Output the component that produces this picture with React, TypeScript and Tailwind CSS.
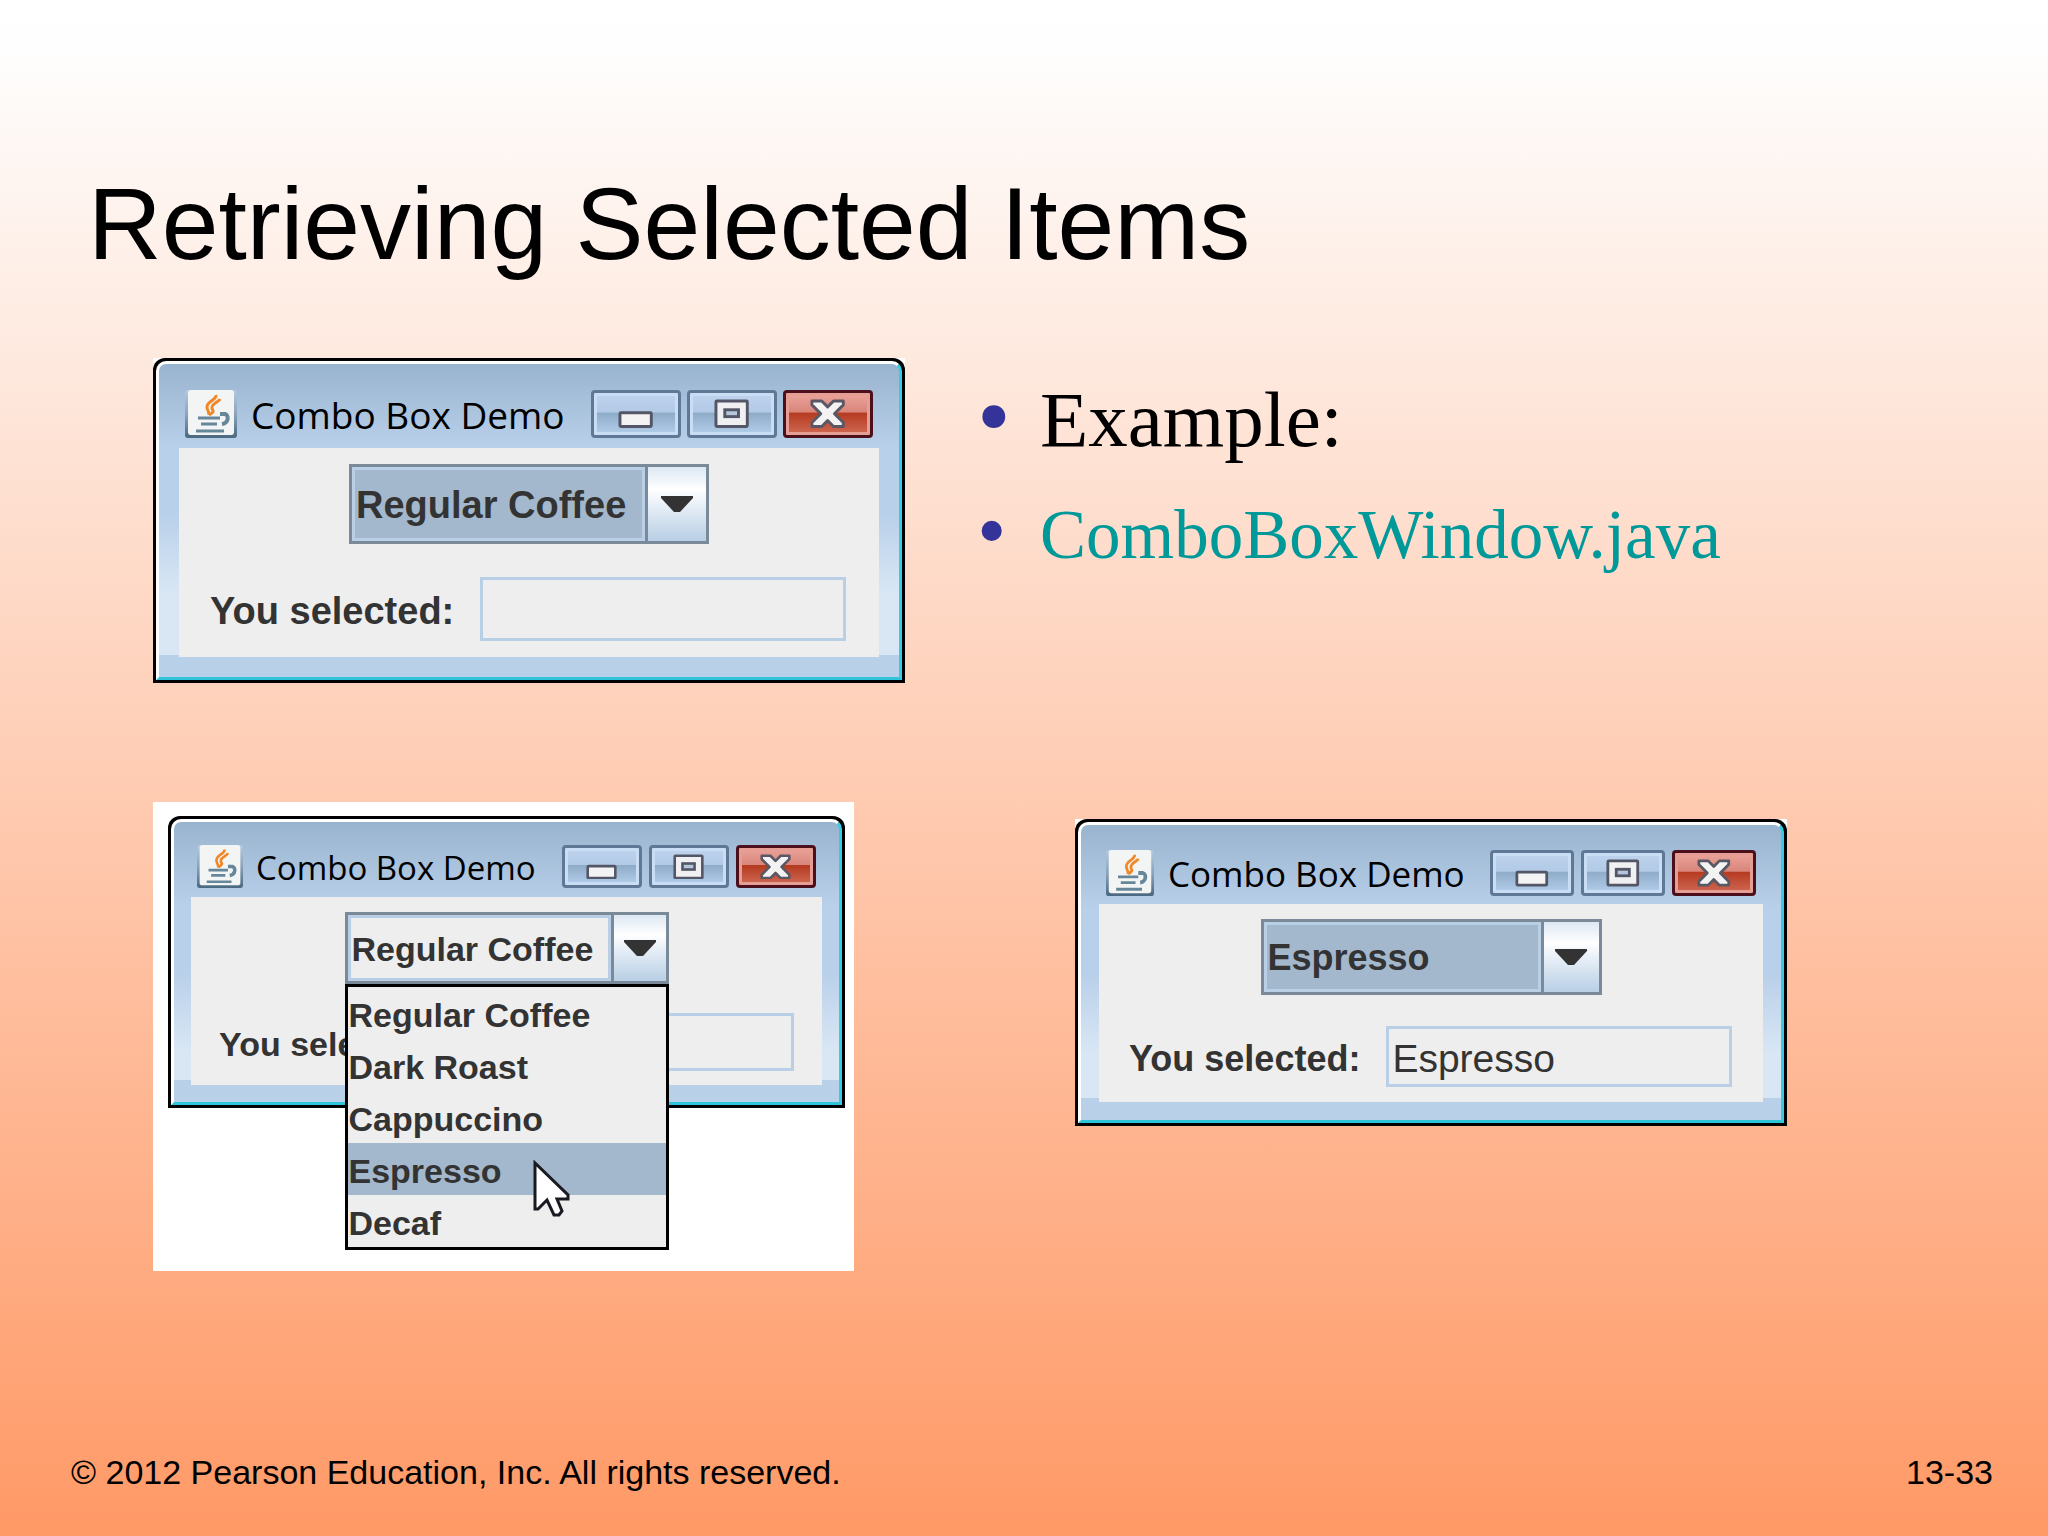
type Size = 'lg' | 'md' | 'sm';

interface DemoWindowProps {
    id: string;
    size: Size;
    item: string;
    result: string;
    open?: boolean;
}

const coffees = ['Regular Coffee', 'Dark Roast', 'Cappuccino', 'Espresso', 'Decaf'];

const sizes = {
    lg: {
        frame: 'w-[752px]',
        bar: 'h-[84px] pt-[26px] px-[26px]',
        icon: 'w-[52px] h-[48px] mr-[14px]',
        title: 'text-[37px] leading-[50px]',
        buttons: 'gap-[6px]',
        button: 'w-[90px] h-[48px]',
        body: 'mx-[20px] mb-[20px] h-[209px] pt-[16px]',
        combo: 'w-[360px] h-[80px] text-[38px]',
        arrow: 'w-[61px]',
        row: 'mt-[33px] pl-[31px] pr-[33px]',
        label: 'text-[38px]',
        field: 'h-[64px] ml-[26px]',
    },
    md: {
        frame: 'w-[712px]',
        bar: 'h-[79px] pt-[25px] px-[25px]',
        icon: 'w-[48px] h-[46px] mr-[14px]',
        title: 'text-[35px] leading-[48px]',
        buttons: 'gap-[7px]',
        button: 'w-[84px] h-[46px]',
        body: 'mx-[18px] mb-[18px] h-[198px] pt-[15px]',
        combo: 'w-[341px] h-[76px] text-[36px]',
        arrow: 'w-[58px]',
        row: 'mt-[31px] pl-[30px] pr-[31px]',
        label: 'text-[36px]',
        field: 'h-[61px] ml-[26px]',
    },
    sm: {
        frame: 'w-[677px]',
        bar: 'h-[75px] pt-[23px] px-[23px]',
        icon: 'w-[46px] h-[43px] mr-[13px]',
        title: 'text-[33px] leading-[45px]',
        buttons: 'gap-[7px]',
        button: 'w-[80px] h-[43px]',
        body: 'mx-[17px] mb-[17px] h-[188px] pt-[15px]',
        combo: 'w-[324px] h-[72px] text-[34px]',
        arrow: 'w-[55px]',
        row: 'mt-[29px] px-[28px]',
        label: 'text-[34px]',
        field: 'h-[58px] ml-[24px]',
    },
};

function JavaIcon({ className }: { className: string }) {
    return (
        <svg viewBox="0 0 52 48" preserveAspectRatio="none" className={className} aria-hidden="true">
            <defs>
                <linearGradient id="java-edge" x1="0" y1="0" x2="0" y2="1">
                    <stop offset="0" stopColor="#b4c9dd" />
                    <stop offset="0.5" stopColor="#8ba4ba" />
                    <stop offset="1" stopColor="#4a687f" />
                </linearGradient>
            </defs>
            <rect x="0" y="0" width="52" height="48" rx="3" fill="url(#java-edge)" />
            <rect x="3" y="0" width="46" height="45" rx="3" fill="#f3f5f5" />
            <path d="M31 5c1 5-9 6-9 12 0 3 2 4 2 8" fill="none" stroke="#f0882a" strokeWidth="3" />
            <path d="M35 9c-1 3-7 4-8 8s5 3-3 8" fill="none" stroke="#f0882a" strokeWidth="3" />
            <path d="M13 28h22M16 34h16M11 41h28" fill="none" stroke="#66869a" strokeWidth="3" />
            <path d="M35 24h5c4 1 4 9-3 10" fill="none" stroke="#66869a" strokeWidth="4" />
        </svg>
    );
}

function MinimizeIcon() {
    return (
        <svg viewBox="0 0 36 30" className="h-7/10" aria-hidden="true">
            <rect x="2" y="14" width="32" height="14" rx="1" fill="#f3f3f3" stroke="#535666" strokeWidth="3" />
        </svg>
    );
}

function MaximizeIcon() {
    return (
        <svg viewBox="0 0 36 30" className="h-7/10" aria-hidden="true">
            <rect x="2" y="2" width="32" height="26" rx="1" fill="#f0f0f2" stroke="#535666" strokeWidth="3" />
            <rect x="11" y="11" width="14" height="7" fill="#b5c6dc" stroke="#535666" strokeWidth="3" />
        </svg>
    );
}

function CloseIcon() {
    return (
        <svg viewBox="0 0 36 30" className="h-7/10" aria-hidden="true">
            <path
                d="M2 2h10l6 6 6-6h10v4l-9 9 9 9v4H24l-6-6-6 6H2v-4l9-9-9-9z"
                fill="#f3f3f3"
                stroke="#5b5865"
                strokeWidth="3"
                strokeLinejoin="round"
            />
        </svg>
    );
}

function Cursor() {
    return (
        <svg viewBox="0 0 38 58" className="absolute left-[185px] top-[173px] w-[38px] h-[58px]" aria-hidden="true">
            <path d="M2 3v46h3l9-9 7 15h5l3-4-5-12h11v-4z" fill="#fff" stroke="#1a1a22" strokeWidth="3" />
        </svg>
    );
}

const captionButton =
    'flex items-center justify-center rounded-[4px] border-3 border-[#5f7896] shadow-[inset_0_0_0_3px_#c9def5] bg-[linear-gradient(#bdd3ee_0%,#b3cae6_46%,#8eabc8_47%,#b4cfec_100%)]';
const closeButton =
    'flex items-center justify-center rounded-[4px] border-3 border-[#4c0f1c] shadow-[inset_0_0_0_3px_#e59d94] bg-[linear-gradient(#eba49b_0%,#d9857a_46%,#b53a20_47%,#d06a55_100%)]';

function DemoWindow({ id, size, item, result, open = false }: DemoWindowProps) {
    const s = sizes[size];

    return (
        <div className={`${s.frame} bg-white font-['Liberation_Sans',sans-serif] text-[#333]`}>
            <div className="bg-black rounded-t-[12px] p-[3px]">
                <div className="border-3 border-t-white border-l-white border-r-[#35cde6] border-b-[#30c4da] rounded-t-[10px] bg-[linear-gradient(#99b4cf_0px,#b9d0ea_84px,#b9d0ea_150px,#d9e7f4_230px,#d9e7f4_calc(100%-22px),#b9d0e9_calc(100%-22px))]">
                    <div className={`${s.bar} flex items-start`}>
                        <JavaIcon className={s.icon} />
                        <div className={`${s.title} flex-1 whitespace-nowrap font-['Open_Sans',sans-serif] text-black`}>Combo Box Demo</div>
                        <div className={`${s.buttons} flex`}>
                            <button type="button" aria-label="Minimize" className={`${s.button} ${captionButton}`}>
                                <MinimizeIcon />
                            </button>
                            <button type="button" aria-label="Maximize" className={`${s.button} ${captionButton}`}>
                                <MaximizeIcon />
                            </button>
                            <button type="button" aria-label="Close" className={`${s.button} ${closeButton}`}>
                                <CloseIcon />
                            </button>
                        </div>
                    </div>
                    <div className={`${s.body} bg-[#eeeeee]`}>
                        <div className={`${s.combo} relative mx-auto font-bold`}>
                            <div className="flex h-full border-3 border-[#7a8a99]">
                                <select
                                    aria-label="Coffee"
                                    defaultValue={item}
                                    className={`flex-1 min-w-0 appearance-none border-3 border-[#b8cfe5] pl-[1px] pt-[2px] font-bold outline-none ${open ? 'bg-[#eeeeee]' : 'bg-[#a3b8cc]'}`}
                                >
                                    {coffees.map((coffee) => (
                                        <option key={coffee}>{coffee}</option>
                                    ))}
                                </select>
                                <div className={`${s.arrow} flex items-center justify-center border-l-3 border-[#7a8a99] bg-[linear-gradient(#dde8f3_0%,#ffffff_30%,#e4edf6_55%,#b8cfe5_100%)]`}>
                                    <svg viewBox="0 0 32 16" className="w-[32px] h-[16px]" aria-hidden="true">
                                        <path d="M0 0h32v2L19 16h-6L0 2z" fill="#333" />
                                    </svg>
                                </div>
                            </div>
                            {open && (
                                <div className="absolute z-10 left-0 top-full w-full border-3 border-black bg-[#eeeeee]">
                                    <ul>
                                        {coffees.map((coffee) => (
                                            <li key={coffee} className={`h-[52px] pl-[1px] leading-[56px] ${coffee === 'Espresso' ? 'bg-[#a3b8cc]' : ''}`}>
                                                {coffee}
                                            </li>
                                        ))}
                                    </ul>
                                    <Cursor />
                                </div>
                            )}
                        </div>
                        <div className={`${s.row} flex items-center`}>
                            <label htmlFor={id} className={`${s.label} pt-[4px] whitespace-nowrap font-bold`}>
                                You selected:
                            </label>
                            <input
                                id={id}
                                type="text"
                                readOnly
                                value={result}
                                className={`${s.field} flex-1 min-w-0 border-3 border-[#b8cfe5] bg-[#eeeeee] px-[3px] pt-[4px] text-[39px] outline-none`}
                            />
                        </div>
                    </div>
                </div>
            </div>
        </div>
    );
}

function App() {
    return (
        <main className="flex flex-col min-h-screen bg-[linear-gradient(#ffffff_0%,#fefefe_3%,#ff9966_100%)] font-['Liberation_Sans',sans-serif] text-black">
            <h1 className="pt-[165px] pl-[88px] text-[102px] leading-[118px]">Retrieving Selected Items</h1>

            <div className="flex mt-[75px] pl-[153px]">
                <DemoWindow id="result-empty" size="lg" item="Regular Coffee" result="" />
                <ul className="ml-[72px] pt-[17px] font-['Liberation_Serif',serif]">
                    <li className="flex text-[79px] leading-[90px]">
                        <span className="w-[63px] text-[96px] leading-[82px] text-[#333399]">•</span>
                        Example:
                    </li>
                    <li className="flex mt-[31px] text-[69px] leading-[78px]">
                        <span className="w-[63px] text-[84px] leading-[70px] text-[#333399]">•</span>
                        <a href="#ComboBoxWindow" className="text-[#009999]">ComboBoxWindow.java</a>
                    </li>
                </ul>
            </div>

            <div className="flex items-start mt-[119px] pl-[153px]">
                <div className="w-[701px] h-[469px] bg-white pt-[14px] pl-[15px]">
                    <DemoWindow id="result-open" size="sm" item="Regular Coffee" result="" open />
                </div>
                <div className="ml-[221px] mt-[17px]">
                    <DemoWindow id="result-espresso" size="md" item="Espresso" result="Espresso" />
                </div>
            </div>

            <footer className="flex justify-between mt-auto pl-[71px] pr-[55px] pb-[44px] text-[34px] leading-[40px]">
                <p>© 2012 Pearson Education, Inc. All rights reserved.</p>
                <p>13-33</p>
            </footer>
        </main>
    );
}

export default App;
